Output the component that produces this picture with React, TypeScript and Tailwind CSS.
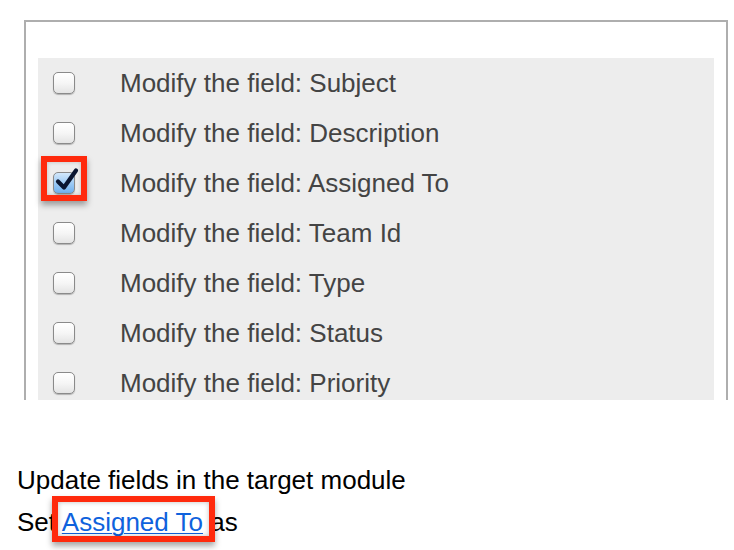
import { memo } from 'react'

const FIELDS = ['Subject', 'Description', 'Assigned To', 'Team Id', 'Type', 'Status', 'Priority']

// Mac-style checkbox, drawn with CSS; the checked one gets a blue fill and a tick
const MacCheckbox = ({ checked }: { checked?: boolean }) => (
  <span
    className={`relative block h-[22px] w-[22px] rounded-[5px] border border-[#8a8a8a] shadow-[0_1px_1px_rgba(0,0,0,0.25)] ${
      checked
        ? 'bg-gradient-to-b from-[#d3e8fb] via-[#9fcbf4] to-[#6fb0ee] border-[#5a7fa8]'
        : 'bg-gradient-to-b from-white via-[#f6f6f6] to-[#e4e4e4]'
    }`}
  >
    {checked && (
      <svg viewBox="0 0 24 24" className="absolute -top-[6px] left-[1px] h-[26px] w-[24px]">
        <path
          d="M3 13.5 L9 19.5 L21 2.5"
          fill="none"
          stroke="#0b1630"
          strokeWidth="4.2"
          strokeLinecap="round"
          strokeLinejoin="round"
        />
      </svg>
    )}
  </span>
)

const FieldRow = memo(({ name }: { name: string }) => {
  const checked = name === 'Assigned To'
  return (
    <div className="flex h-[50px] items-center">
      <div className="relative ml-[15px] w-[67px]">
        <MacCheckbox checked={checked} />
        {checked && (
          <span className="pointer-events-none absolute -left-[12px] -top-[16px] h-[45px] w-[46px] border-[6px] border-[#ff2a0d] shadow-[0_4px_6px_rgba(0,0,0,0.35),inset_0_0_4px_rgba(0,0,0,0.2)]" />
        )}
      </div>
      <span className="text-[26px] leading-none text-[#444]">Modify the field: {name}</span>
    </div>
  )
})

FieldRow.displayName = 'FieldRow'

export default function App() {
  return (
    <div className="h-[550px] w-[734px] overflow-hidden bg-white font-['Liberation_Sans',Arial,sans-serif]">
      {/* Scrolling field list */}
      <div className="ml-[24px] mt-[20px] h-[380px] w-[704px] overflow-hidden border-x-2 border-t-2 border-[#aeaeae] pl-[12px] pr-[12px] pt-[36px]">
        <div className="bg-[#ededed]">
          {FIELDS.map((f) => (
            <FieldRow key={f} name={f} />
          ))}
        </div>
      </div>

      {/* Action text */}
      <div className="ml-[17px] mt-[67px] text-[26px] leading-none text-black">
        <div>Update fields in the target module</div>
        <div className="mt-[16px]">
          Set{' '}
          <span className="relative">
            <a href="#" className="text-[#0f62dd] underline decoration-1 underline-offset-2">
              Assigned To
            </a>
            <span className="pointer-events-none absolute -left-[10px] -top-[11px] h-[46px] w-[163px] border-[6px] border-[#ff2a0d] shadow-[0_4px_6px_rgba(0,0,0,0.35),inset_0_0_5px_rgba(0,0,0,0.25)]" />
          </span>{' '}
          as
        </div>
      </div>
    </div>
  )
}
